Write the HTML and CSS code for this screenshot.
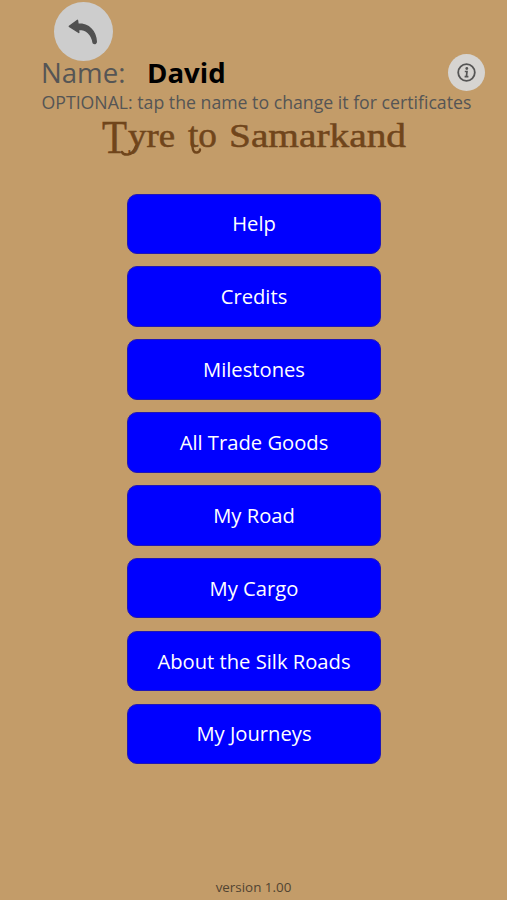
FILE: index.html
```html
<!DOCTYPE html>
<html lang="en">
<head>
  <meta charset="UTF-8" />
  <title>Tyre to Samarkand</title>
  <link rel="stylesheet" href="styles.css">
</head>
<body>

  <!-- Back button -->
  <button class="round back" aria-label="Back">
    <svg width="59" height="59" viewBox="0 0 59 59">
      <path d="M15.3 24.3 L23.5 18.3 L24 22 C35 22 42 29 42.3 40 Q41.5 42.5 39.2 41 C38 32 32 27 24.5 27.3 L24.8 30.5 Z" fill="#505050" stroke="#505050" stroke-width="1.4" stroke-linejoin="round" />
    </svg>
  </button>

  <!-- Player name -->
  <div class="name-row">
    <span class="label">Name:</span>
    <span class="name">David</span>
    <button class="round info" aria-label="Information">
      <svg width="37" height="37" viewBox="0 0 37 37" fill="none" stroke="#555">
        <circle cx="18.5" cy="18.5" r="8.3" stroke-width="1.8" />
        <circle cx="18.8" cy="14.5" r="1.4" fill="#555" stroke="none" />
        <path d="M16.8 17.5h2.2l-.6 5.3M16.6 22.6h3.8" stroke-width="1.7" />
      </svg>
    </button>
  </div>
  <p class="hint">OPTIONAL: tap the name to change it for certificates</p>

  <!-- Title with curls under the y and the t -->
  <h1 class="title">
    <svg width="310" height="40" viewBox="0 0 310 40">
      <text x="1" y="34" font-size="46" textLength="25" lengthAdjust="spacingAndGlyphs">T</text>
      <text x="27" y="28" font-size="33" textLength="47" lengthAdjust="spacingAndGlyphs">yre</text>
      <text x="87" y="28" font-size="35" textLength="29" lengthAdjust="spacingAndGlyphs">to</text>
      <text x="128" y="28" font-size="34.5" textLength="177" lengthAdjust="spacingAndGlyphs">Samarkand</text>
      <path d="M21 33 Q22 36 27 35.5 Q32 35 35 27" />
      <path d="M91.5 24 L91.5 28 Q92 34 96 33.5 Q99 33 99 30.5" />
    </svg>
  </h1>

  <!-- Main menu -->
  <div class="menu">
    <button>Help</button>
    <button>Credits</button>
    <button>Milestones</button>
    <button>All Trade Goods</button>
    <button>My Road</button>
    <button>My Cargo</button>
    <button>About the Silk Roads</button>
    <button>My Journeys</button>
  </div>

  <div class="version">version 1.00</div>

</body>
</html>
```
FILE: styles.css
```css
* {
  box-sizing: border-box;
}

body {
  display: flex;
  flex-direction: column;
  height: 900px;
  margin: 0;
  padding: 2px 0 4px;
  background: #c39c69;
  color: #555;
  font-family: "Open Sans", "Noto Sans", sans-serif;
  overflow: hidden;
}

button {
  border: none;
  padding: 0;
  font-family: inherit;
  cursor: pointer;
}

.round {
  border-radius: 50%;
  background: #cdcdcd;
}
.round svg {
  display: block;
}

.back {
  width: 59px;
  height: 59px;
  margin-left: 54px;
  flex-shrink: 0;
}

.name-row {
  display: flex;
  align-items: center;
  height: 37px;
  margin-top: -7px;
  padding: 0 22px 0 41px;
  font-size: 27.6px;
  line-height: 36px;
  white-space: nowrap;
}
.label {
  width: 106px;
  padding-bottom: 1px;
}
.name {
  padding-bottom: 1px;
  color: black;
  font-weight: bold;
}
.info {
  width: 37px;
  height: 37px;
  margin-left: auto;
  background: #d6d4d1;
}

.hint {
  margin: -1px 0 0 41.5px;
  font-size: 17.7px;
  line-height: 24px;
  white-space: nowrap;
}

.title {
  height: 40px;
  margin: 5px 0 0 101px;
}
.title svg {
  display: block;
  overflow: visible;
}
.title text {
  fill: #70451b;
  stroke: #70451b;
  stroke-width: 0.5;
  font-family: "Liberation Serif", serif;
  font-weight: normal;
}
.title path {
  fill: none;
  stroke: #70451b;
  stroke-width: 2.4;
  stroke-linecap: round;
}

.menu {
  display: grid;
  grid-auto-rows: 60.5px;
  gap: 12.4px;
  width: 254px;
  margin: 34.5px 0 0 127px;
}
.menu button {
  padding-bottom: 1px;
  border: 1px solid #2017b5;
  border-radius: 10px;
  background: blue;
  color: white;
  font-size: 20.2px;
}

.version {
  margin-top: auto;
  color: #514432;
  font-size: 13.4px;
  line-height: 17px;
  text-align: center;
}
```
